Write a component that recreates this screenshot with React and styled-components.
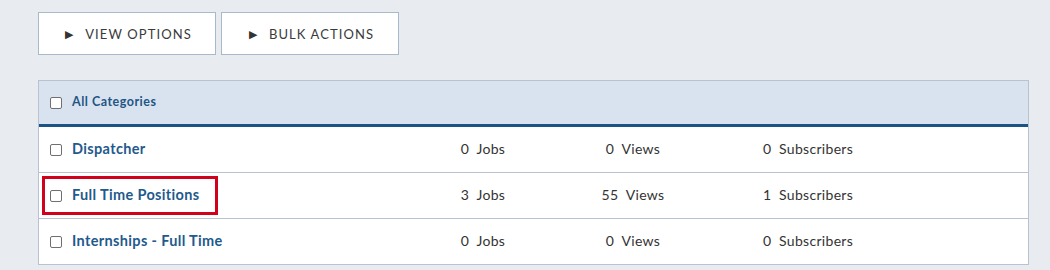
import styled, { createGlobalStyle } from "styled-components";

const GlobalStyle = createGlobalStyle`
  body {
    margin: 0;
    background: #e8ecf1;
    font-family: "Lato", "Open Sans", sans-serif;
  }
`;

const categories = [
  { name: "Dispatcher", jobs: 0, views: 0, subscribers: 0 },
  { name: "Full Time Positions", jobs: 3, views: 55, subscribers: 1, highlight: true },
  { name: "Internships - Full Time", jobs: 0, views: 0, subscribers: 0 },
];

export default function App() {
  return (
    <>
      <GlobalStyle />
      <Page>
        <Toolbar>
          <ToolButton>
            <Arrow>▶</Arrow>VIEW OPTIONS
          </ToolButton>
          <ToolButton>
            <Arrow>▶</Arrow>BULK ACTIONS
          </ToolButton>
        </Toolbar>
        <Table>
          <HeaderRow>
            <NameGroup>
              <Check type="checkbox" />
              <HeaderLabel>All Categories</HeaderLabel>
            </NameGroup>
          </HeaderRow>
          {categories.map((c) => (
            <Row key={c.name}>
              <NameCell>
                <NameGroup $highlight={c.highlight}>
                  <Check type="checkbox" />
                  <CategoryName>{c.name}</CategoryName>
                </NameGroup>
              </NameCell>
              <Stat>
                {c.jobs}&nbsp;&nbsp;Jobs
              </Stat>
              <Stat>
                {c.views}&nbsp;&nbsp;Views
              </Stat>
              <Stat>
                {c.subscribers}&nbsp;&nbsp;Subscribers
              </Stat>
              <div />
            </Row>
          ))}
        </Table>
      </Page>
    </>
  );
}

const Page = styled.div`
  padding: 12px 21px 0 38px;
`;

const Toolbar = styled.div`
  display: flex;
  gap: 5px;
  margin-bottom: 25px;
`;

const ToolButton = styled.button`
  display: flex;
  align-items: center;
  justify-content: center;
  width: 178px;
  height: 43px;
  background: #ffffff;
  border: 1px solid #a9b9cc;
  font-family: inherit;
  font-size: 13px;
  letter-spacing: 1.1px;
  color: #3a3a3a;
  padding: 0 0 0 3px;
`;

const Arrow = styled.span`
  font-size: 11px;
  margin-right: 11px;
  color: #333;
`;

const Table = styled.div`
  border: 1px solid #b7c3d1;
  border-bottom: none;
  background: #ffffff;
`;

const HeaderRow = styled.div`
  display: flex;
  align-items: center;
  box-sizing: border-box;
  height: 46px;
  padding: 0 0 0 3px;
  background: #d9e3ef;
  border-bottom: 3px solid #1a5384;
`;

const Row = styled.div`
  display: grid;
  grid-template-columns: 369px 150px 150px 200px 1fr;
  align-items: center;
  box-sizing: border-box;
  height: 46px;
  padding-bottom: 3px;
  border-bottom: 1px solid #b7c3d1;
`;

const NameCell = styled.div`
  padding: 3px 0 0 3px;
`;

const NameGroup = styled.div`
  display: inline-flex;
  align-items: center;
  gap: 10px;
  height: 30px;
  padding: 0 15px 3px 5px;
  border: 3px solid ${(p) => (p.$highlight ? "#d0021b" : "transparent")};
`;

const Check = styled.input`
  appearance: none;
  margin: 3px 0 0;
  width: 12px;
  height: 12px;
  border: 1px solid #6f6f6f;
  border-radius: 2px;
  background: #fff;
`;

const HeaderLabel = styled.span`
  font-size: 12.5px;
  font-weight: 700;
  letter-spacing: 0.5px;
  color: #1f5585;
`;

const CategoryName = styled.span`
  font-size: 14.5px;
  font-weight: 700;
  letter-spacing: 0.35px;
  color: #1f5a8c;
`;

const Stat = styled.div`
  text-align: center;
  font-size: 14px;
  letter-spacing: 0.3px;
  color: #333;
`;
